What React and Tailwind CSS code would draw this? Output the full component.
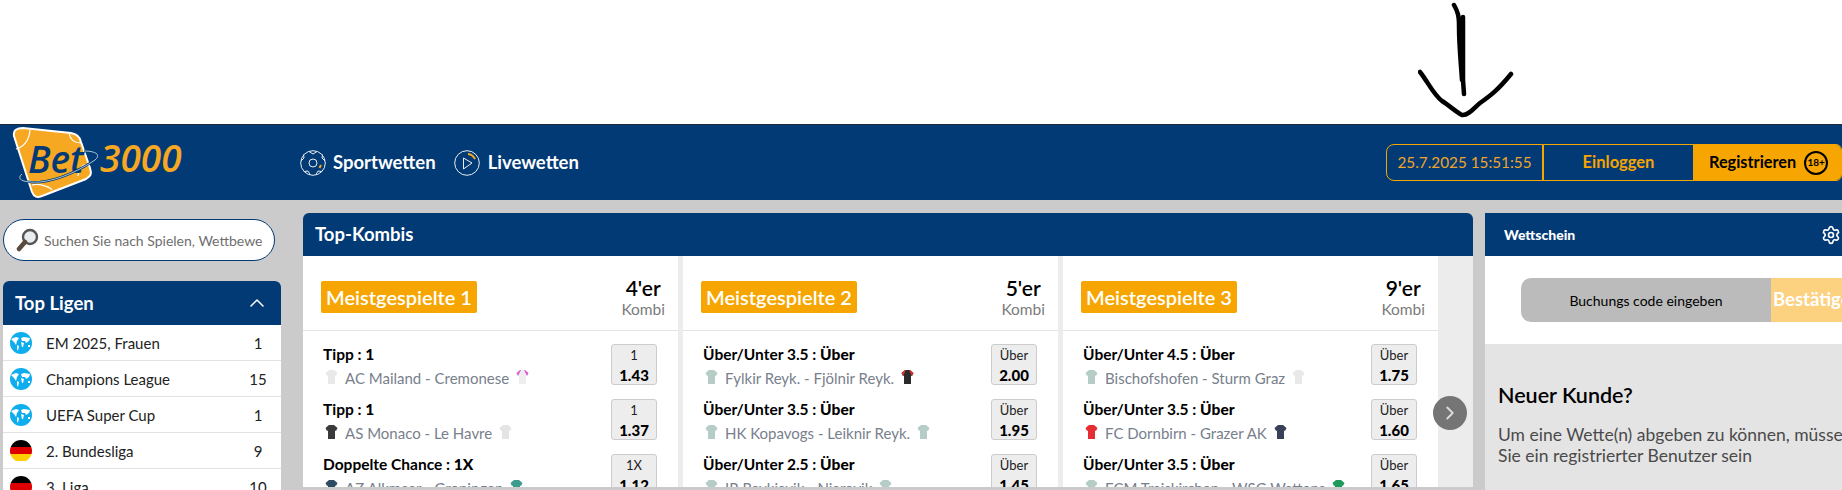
import { ChevronRight, ChevronUp, Settings } from "lucide-react";

const leagues = [
  { name: "EM 2025, Frauen", count: 1, flag: "world" },
  { name: "Champions League", count: 15, flag: "world" },
  { name: "UEFA Super Cup", count: 1, flag: "world" },
  { name: "2. Bundesliga", count: 9, flag: "de" },
  { name: "3. Liga", count: 10, flag: "de" },
];

const combos = [
  {
    title: "Meistgespielte 1",
    size: "4'er",
    bets: [
      { market: "Tipp", pick: "1", match: "AC Mailand - Cremonese", home: "#e9e9e9", away: "#eee", awayTrim: "#d95fd0", label: "1", odd: "1.43" },
      { market: "Tipp", pick: "1", match: "AS Monaco - Le Havre", home: "#3a3a3a", away: "#e4e4e4", label: "1", odd: "1.37" },
      { market: "Doppelte Chance", pick: "1X", match: "AZ Alkmaar - Groningen", home: "#2f4a63", away: "#3c9c90", label: "1X", odd: "1.12" },
    ],
  },
  {
    title: "Meistgespielte 2",
    size: "5'er",
    bets: [
      { market: "Über/Unter 3.5", pick: "Über", match: "Fylkir Reyk. - Fjölnir Reyk.", home: "#b5cdc6", away: "#2a2a2a", awayTrim: "#d8322c", label: "Über", odd: "2.00" },
      { market: "Über/Unter 3.5", pick: "Über", match: "HK Kopavogs - Leiknir Reyk.", home: "#b5cdc6", away: "#b5cdc6", label: "Über", odd: "1.95" },
      { market: "Über/Unter 2.5", pick: "Über", match: "IR Reykjavik - Njarovik", home: "#b5cdc6", away: "#b5cdc6", label: "Über", odd: "1.45" },
    ],
  },
  {
    title: "Meistgespielte 3",
    size: "9'er",
    bets: [
      { market: "Über/Unter 4.5", pick: "Über", match: "Bischofshofen - Sturm Graz", home: "#b5cdc6", away: "#e9e9e9", label: "Über", odd: "1.75" },
      { market: "Über/Unter 3.5", pick: "Über", match: "FC Dornbirn - Grazer AK", home: "#e52d33", away: "#39415a", label: "Über", odd: "1.60" },
      { market: "Über/Unter 3.5", pick: "Über", match: "FCM Traiskirchen - WSG Wattens", home: "#b5cdc6", away: "#1f9a5a", label: "Über", odd: "1.65" },
    ],
  },
];

function Jersey({ color, trim }) {
  return (
    <svg width="13" height="16" viewBox="0 0 13 16" className="mb-[3px] shrink-0">
      <path d="M4 1 L9 1 L12.5 4 L11 7 L10 6.5 L10 15 L3 15 L3 6.5 L2 7 L.5 4 Z" fill={color} />
      {trim && <path d="M.5 4 L4 1 L5 1 L2 7 Z M12.5 4 L9 1 L8 1 L11 7 Z" fill={trim} />}
    </svg>
  );
}

function Flag({ type }) {
  if (type === "de") {
    return (
      <div className="flex h-[22px] w-[22px] shrink-0 flex-col overflow-hidden rounded-full">
        <div className="flex-1 bg-black" />
        <div className="flex-1 bg-[#dd0000]" />
        <div className="flex-1 bg-[#ffce00]" />
      </div>
    );
  }
  return (
    <svg width="22" height="22" viewBox="0 0 22 22" className="shrink-0">
      <circle cx="11" cy="11" r="11" fill="#0dadee" />
      <path d="M1 7 L6 5 L9 6 L7 9 L6 13 L4 10 Z M7 13 L9 14 L8 19 L7 17 Z M11 6 L14 5 L20 6 L19 9 L16 11 L15 9 L12 9 Z M11 10 L14 11 L13 15 L12 15 Z M18 13 L20 13 L20 15 L18 15 Z" fill="#fff" />
    </svg>
  );
}

function Logo() {
  return (
    <svg width="176" height="72" viewBox="0 0 176 72" className="shrink-0">
      <path d="M2 9 C1 3 5 1 11 1 L59 6 C65 7 68 10 69 15 L78 41 C80 47 79 49 74 52 L30 69 C25 71 22 70 20 65 Z" fill="#f7a823" stroke="#fff" strokeWidth="2" />
      <path d="M4 22 C11 20 17 14 18 3 M57 6 C58 12 62 16 69 16 M20 58 C27 56 38 60 40 63 M76 37 C69 38 66 42 66 49" fill="none" stroke="#fff" strokeWidth="1.2" />
      <text x="16" y="46" fontFamily="Open Sans, sans-serif" fontSize="37" fontStyle="italic" fontWeight="600" fill="#023a75">Bet</text>
      <path d="M10 47 C4 52 10 56 28 55 C48 53 70 42 83 33 C90 27 82 24 72 24" fill="none" stroke="#023a75" strokeWidth="2.5" />
      <path d="M10 47 C4 52 10 56 28 55 C48 53 70 42 83 33 C90 27 82 24 72 24" fill="none" stroke="#d6e4f2" strokeWidth="0.8" />
      <text x="88" y="45" fontFamily="Open Sans, sans-serif" fontSize="37" fontStyle="italic" fontWeight="600" fill="#f7a823">3000</text>
    </svg>
  );
}

function BallIcon() {
  return (
    <svg width="26" height="26" viewBox="0 0 26 26" fill="none" stroke="#e8edf3" strokeWidth="1" className="shrink-0">
      <circle cx="13" cy="13" r="12.3" />
      <circle cx="13" cy="13" r="4" />
      <path d="M9 1.5 L13 4 L17 1.5 M1 11 L4 8 L3.5 4.5 M25 11 L22 8 L22.5 4.5 M4 21.5 L8 21 L10 24.5 M22 21.5 L18 21 L16 24.5" />
      <path d="M21 15 L19.5 18" stroke="#f7a823" strokeWidth="2" />
    </svg>
  );
}

function LiveIcon() {
  return (
    <svg width="26" height="26" viewBox="0 0 26 26" fill="none" stroke="#e8edf3" strokeWidth="1" className="shrink-0">
      <circle cx="13" cy="13" r="12.3" />
      <path d="M9.5 8 L18 13 L9.5 19 Z" />
      <path d="M14 4 A9 9 0 0 1 21 9" stroke="#f7a823" strokeWidth="2" />
    </svg>
  );
}

function SearchIcon() {
  return (
    <svg width="24" height="26" viewBox="0 0 24 26" className="shrink-0">
      <circle cx="14" cy="10" r="7" fill="#e9edef" stroke="#555" strokeWidth="2.4" />
      <path d="M9 15 L3 22" stroke="#5a4a3a" strokeWidth="4.5" strokeLinecap="round" />
    </svg>
  );
}

function Arrow() {
  return (
    <svg width="106" height="118" viewBox="0 0 106 118" fill="none" stroke="#000" strokeWidth="4.5" strokeLinecap="round" strokeLinejoin="round">
      <path d="M36 3 C40 10 41 14 41 24 C41 44 43 62 44 78 M45 15 L45 78 L46 92" />
      <path d="M2 70 C10 80 15 92 24 99 C32 104 38 110 44 113 C50 114 56 106 62 101 C72 94 80 88 93 72" />
    </svg>
  );
}

function BetRow({ bet }) {
  return (
    <div className="flex h-[55px] items-start justify-between pl-[20px] pr-[21px]">
      <div className="min-w-0">
        <div className="h-[22px] whitespace-nowrap text-[15.5px] font-bold leading-[20px] text-black">
          {bet.market} : <span className="font-black">{bet.pick}</span>
        </div>
        <div className="flex h-[24px] items-center gap-[7px] whitespace-nowrap pl-[2px] text-[15px] leading-[20px] text-[#78808c]">
          <Jersey color={bet.home} />
          <span>{bet.match}</span>
          <Jersey color={bet.away} trim={bet.awayTrim} />
        </div>
      </div>
      <div className="flex h-[41px] w-[46px] shrink-0 flex-col items-center rounded-[3px] border border-[#ccc] bg-[#ededed]">
        <span className="h-[20px] text-[13px] leading-[20px] text-[#222]">{bet.label}</span>
        <span className="text-[15px] font-black leading-[20px] text-black">{bet.odd}</span>
      </div>
    </div>
  );
}

function ComboCard({ combo }) {
  return (
    <div className="flex w-[375px] shrink-0 flex-col bg-white">
      <div className="flex h-[75px] shrink-0 items-center justify-between border-b border-[#e4e4e4] pl-[18px] pr-[13px] pt-[7px]">
        <div className="flex h-[32px] w-[156px] items-center justify-center rounded-[2px] bg-[#f7a500] text-[20px] font-semibold text-white">
          {combo.title}
        </div>
        <div className="flex flex-col items-center">
          <span className="text-[21px] font-semibold leading-[24px] text-black">{combo.size}</span>
          <span className="text-[15.5px] leading-[18px] text-[#7b7b7b]">Kombi</span>
        </div>
      </div>
      <div className="h-[156px] overflow-hidden pt-[13px]">
        {combo.bets.map((bet) => (
          <BetRow key={bet.match} bet={bet} />
        ))}
      </div>
    </div>
  );
}

export default function App() {
  return (
    <div className="h-[490px] w-full overflow-hidden bg-[#cbcbcb] font-['Lato','Noto_Sans',sans-serif]">
      <div className="flex h-[124px] justify-end bg-white pr-[318px] pt-[2px]">
        <Arrow />
      </div>

      <header className="flex h-[76px] items-center border-t border-[#1f2a3a] bg-[#023a75]">
        <div className="ml-[12px] w-[288px]">
          <Logo />
        </div>
        <nav className="flex items-center text-white">
          <BallIcon />
          <span className="ml-[7px] text-[18.5px] font-bold">Sportwetten</span>
          <span className="ml-[18px]">
            <LiveIcon />
          </span>
          <span className="ml-[8px] text-[18.5px] font-bold">Livewetten</span>
        </nav>
        <div className="ml-auto flex h-[37px] w-[456px] overflow-hidden rounded-l-[8px] rounded-r-[6px] border border-[#f7a500] text-[15.3px]">
          <div className="flex w-[157px] items-center justify-center border-r-2 border-[#f7a500] text-[#f0a52a]">
            25.7.2025 15:51:55
          </div>
          <div className="flex w-[149px] items-center justify-center text-[16.5px] font-bold text-[#f7a500]">
            Einloggen
          </div>
          <div className="flex flex-1 items-center gap-[8px] bg-[#f7a500] pl-[16px] text-[16.3px] font-bold text-black">
            Registrieren
            <span className="flex h-[24px] w-[24px] items-center justify-center rounded-full border-2 border-black text-[10px] font-bold">
              18+
            </span>
          </div>
        </div>
      </header>

      <div className="flex items-start pl-[3px]">
        <aside className="mt-[19px] w-[278px] shrink-0">
          <div className="flex h-[42px] w-[272px] items-center gap-[4px] rounded-full border border-[#023a75] bg-white pl-[12px] pr-[12px]">
            <SearchIcon />
            <span className="overflow-hidden whitespace-nowrap text-[14px] text-[#6e6e6e]">
              Suchen Sie nach Spielen, Wettbewerben
            </span>
          </div>
          <div className="mt-[20px] overflow-hidden rounded-t-[6px] bg-white">
            <div className="flex h-[44px] items-center justify-between bg-[#023a75] pl-[12px] pr-[12px] text-white">
              <span className="pt-[1px] text-[18.5px] font-bold">Top Ligen</span>
              <ChevronUp size={24} strokeWidth={1.5} />
            </div>
            {leagues.map((league) => (
              <div
                key={league.name}
                className="flex h-[36px] items-center border-b border-[#e2e2e2] pl-[7px] text-[15px] text-[#222]"
              >
                <Flag type={league.flag} />
                <span className="ml-[14px] flex-1 pt-[1px]">{league.name}</span>
                <span className="w-[38px] pr-[8px] pt-[1px] text-center">{league.count}</span>
              </div>
            ))}
          </div>
        </aside>

        <main className="ml-[22px] mt-[13px] w-[1170px] shrink-0">
          <div className="flex h-[43px] items-center rounded-t-[6px] bg-[#023a75] pl-[12px] text-[18.5px] font-bold text-white">
            Top-Kombis
          </div>
          <div className="relative flex gap-[5px] bg-[#ececec]">
            {combos.map((combo) => (
              <ComboCard key={combo.title} combo={combo} />
            ))}
            <div className="absolute left-[1130px] top-[140px] flex h-[34px] w-[34px] items-center justify-center rounded-full bg-[#757575] text-[#ddd]">
              <ChevronRight size={22} strokeWidth={2} />
            </div>
          </div>
        </main>

        <section className="ml-[12px] mt-[13px] w-[357px] shrink-0">
          <div className="flex h-[43px] items-center justify-between bg-[#023a75] pl-[19px] pr-[1px] text-white">
            <span className="text-[14px] font-black">Wettschein</span>
            <Settings size={20} strokeWidth={2} />
          </div>
          <div className="flex h-[88px] items-center bg-white pl-[36px]">
            <div className="flex h-[44px] w-[250px] shrink-0 items-center justify-center rounded-l-[10px] bg-[#bbbbbb] text-[14px] text-black">
              Buchungs code eingeben
            </div>
            <div className="flex h-[44px] flex-1 items-center overflow-hidden whitespace-nowrap bg-[#fcd17f] pl-[2px] text-[18.5px] font-bold text-white">
              Bestätigen
            </div>
          </div>
          <div className="h-[146px] bg-[#e4e4e4] pl-[13px] pt-[37px]">
            <h2 className="text-[21.5px] font-semibold leading-[28px] text-black">Neuer Kunde?</h2>
            <p className="mt-[15px] whitespace-nowrap text-[17.5px] leading-[21px] text-[#4a4a4a]">
              Um eine Wette(n) abgeben zu können, müssen
              <br />
              Sie ein registrierter Benutzer sein
            </p>
          </div>
        </section>
      </div>
    </div>
  );
}
